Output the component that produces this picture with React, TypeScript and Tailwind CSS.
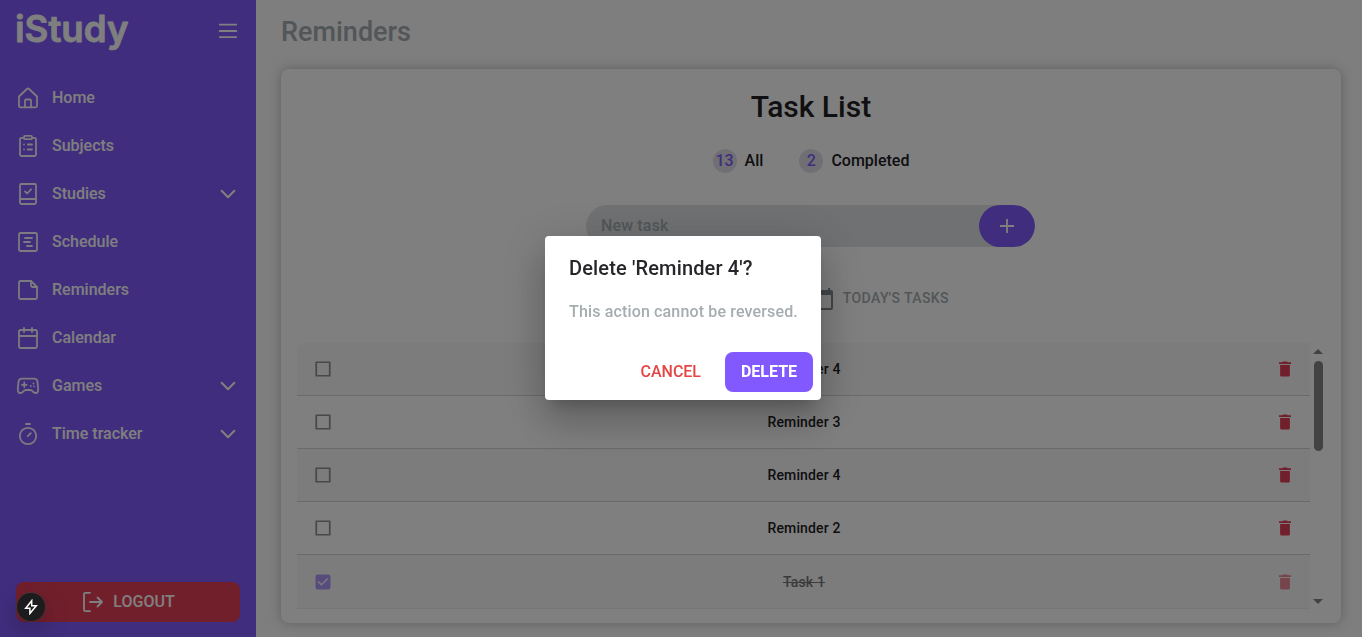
import type { ReactNode } from "react";

function Icon({ children, className = "" }: { children: ReactNode; className?: string }) {
  return (
    <svg
      viewBox="0 0 24 24"
      className={`size-6 shrink-0 ${className}`}
      fill="none"
      stroke="currentColor"
      strokeWidth="1.8"
      strokeLinecap="round"
      strokeLinejoin="round"
    >
      {children}
    </svg>
  );
}

const nav: { label: string; expandable?: boolean; icon: ReactNode }[] = [
  {
    label: "Home",
    icon: (
      <>
        <path d="M3 10.5 10.9 3q1.1-1 2.2 0L21 10.5V19.800a1.5 1.5 0 0 1-1.5 1.5h-15A1.5 1.5 0 0 1 3 19.800Z" />
        <path d="M9 21.300v-6.900a.9.9 0 0 1 .9-.9h4.2a.9.9 0 0 1 .9.9V21.300" />
      </>
    ),
  },
  {
    label: "Subjects",
    icon: (
      <>
        <path d="M8 3.8H5.5A1.5 1.5 0 0 0 4 5.3V20.5A1.5 1.5 0 0 0 5.5 22h13a1.5 1.5 0 0 0 1.5-1.5V5.3a1.5 1.5 0 0 0-1.5-1.5H16" />
        <rect x="8" y="1.9" width="8" height="3.3" rx="1" />
        <path d="M8 10.5h.01M8 15.5h.01M11.8 10.5h4.2M11.8 15.5h4.2" />
      </>
    ),
  },
  {
    label: "Studies",
    expandable: true,
    icon: (
      <>
        <rect x="4" y="2" width="16" height="20" rx="1.5" />
        <path d="M4 17h16M9 9.3l2.1 2.2 4-4.2" />
      </>
    ),
  },
  {
    label: "Schedule",
    icon: (
      <>
        <rect x="3" y="3" width="18" height="18" rx="1.5" />
        <path d="M9 8h7M8 12h6M11 16h5" />
      </>
    ),
  },
  {
    label: "Reminders",
    icon: (
      <>
        <path d="M15 3H4.5A1.5 1.5 0 0 0 3 4.5v15A1.5 1.5 0 0 0 4.5 21h15a1.5 1.5 0 0 0 1.5-1.5V9Z" />
        <path d="M15 3v4.5A1.5 1.5 0 0 0 16.5 9H21" />
      </>
    ),
  },
  {
    label: "Calendar",
    icon: (
      <>
        <rect x="3" y="4" width="18" height="18" rx="1.5" />
        <path d="M3 10h18M8 2v4M16 2v4" />
      </>
    ),
  },
  {
    label: "Games",
    expandable: true,
    icon: (
      <>
        <path d="M6 4.7h12q3 0 3.5 3L22.2 15.5q.1 3.5-2.7 3.5-1.5 0-2.7-1.5T14 16h-4q-1.6 0-2.8 1.5T4.5 19q-2.8 0-2.7-3.5L2.5 7.7q.5-3 3.5-3Z" />
        <path d="M8.3 8.5v4.6M6 10.8h4.6M17.5 9.5h.01M14.8 12h.01M18 12.3h.01" />
      </>
    ),
  },
  {
    label: "Time tracker",
    expandable: true,
    icon: (
      <>
        <circle cx="12" cy="14" r="8.2" />
        <path d="m11.8 14.2 3-3M10 2h4" />
      </>
    ),
  },
];

function Sidebar() {
  return (
    <aside className="flex w-64 shrink-0 flex-col bg-[#815bfb] px-4 text-white">
      <div className="flex h-[62px] items-center justify-between">
        <svg viewBox="0 0 114 48" className="h-12 w-[114px] overflow-visible" role="img">
          <text
            x="-1"
            y="34.5"
            textLength="113.5"
            lengthAdjust="spacingAndGlyphs"
            fill="white"
            stroke="white"
            strokeWidth="0.8"
            strokeLinejoin="round"
            className="font-['Inter',sans-serif] text-[37px] font-semibold"
          >
            iStudy
          </text>
        </svg>
        <Icon>
          <path d="M4 5.7h16M4 12h16M4 18.2h16" strokeLinecap="square" />
        </Icon>
      </div>
      <nav className="mt-3 flex flex-col">
        {nav.map((item) => (
          <div key={item.label} className="flex h-12 items-center gap-3 text-white">
            <Icon className="opacity-95">{item.icon}</Icon>
            <span className="flex-1 text-base leading-6 font-medium">{item.label}</span>
            {item.expandable && (
              <Icon>
                <path d="m5.6 8.8 6.4 6.4 6.4-6.4" strokeWidth="2" />
              </Icon>
            )}
          </div>
        ))}
      </nav>
      <button className="mt-auto mb-[15px] flex h-10 items-center justify-center rounded-lg bg-[#e53e58] text-base font-medium text-white">
        <Icon className="mr-2">
          <path d="M9 2.8H4.5A1.5 1.5 0 0 0 3 4.3v15.4a1.5 1.5 0 0 0 1.5 1.5H9M9 12h12M16.5 7.5 21 12l-4.5 4.5" />
        </Icon>
        LOGOUT
      </button>
    </aside>
  );
}

const tasks = [
  { title: "Reminder 4", done: false },
  { title: "Reminder 3", done: false },
  { title: "Reminder 4", done: false },
  { title: "Reminder 2", done: false },
  { title: "Task 1", done: true },
];

function TaskRow({ title, done }: { title: string; done: boolean }) {
  return (
    <li className="h-[53.3px] border-b border-[#d4d4d4] odd:bg-[#f8f8f8] first:h-[52.5px] first:rounded-tl-lg last:border-[#ededed] last:bg-[#f4f4f4]">
      <div className={`flex h-full items-center pr-4 pl-[17px] ${done ? "opacity-60" : ""}`}>
        <svg viewBox="0 0 24 24" className="size-[18px] shrink-0">
          {done ? (
            <path
              fill="#815bfb"
              d="M19 2H5a3 3 0 0 0-3 3v14a3 3 0 0 0 3 3h14a3 3 0 0 0 3-3V5a3 3 0 0 0-3-3ZM10 17l-5-5 1.4-1.4 3.6 3.6 7.6-7.6L19 8l-9 9Z"
            />
          ) : (
            <path fill="none" stroke="#909090" strokeWidth="2.3" d="M3 3h18v18H3Z" strokeLinejoin="round" />
          )}
        </svg>
        <span className={`flex-1 text-center text-sm font-medium tracking-[0.15px] text-[#202024] ${done ? "line-through" : ""}`}>
          {title}
        </span>
        <svg viewBox="0 0 24 24" className="size-[18px] shrink-0" fill="#e53e58">
          <path d="M5.5 6.5V20a2 2 0 0 0 2 2h9a2 2 0 0 0 2-2V6.5ZM20 3h-4.5l-1-1h-5l-1 1H4v2.2h16Z" />
        </svg>
      </div>
    </li>
  );
}

function Main() {
  return (
    <main className="flex min-w-0 flex-1 flex-col bg-[#fcfcfc] pr-[21px] pb-[14px] pl-[25px]">
      <h1 className="flex h-[69px] items-center pb-[5px] text-[27px] font-medium text-[#a5adb0]">Reminders</h1>
      <section className="flex min-h-0 flex-1 flex-col rounded-lg bg-white px-4 shadow-[0_0_12px_rgba(0,0,0,0.25)]">
        <h2 className="mt-[18px] text-center text-[30px] leading-10 font-medium text-[#202024]">Task List</h2>
        <div className="mt-[22px] flex h-6 items-center justify-center text-base font-medium text-[#202024]">
          <span className="mr-2 flex size-6 items-center justify-center rounded-full bg-[#e0e0e8] text-[#815bfb]">13</span>
          All
          <span className="mr-2 ml-9 flex size-6 items-center justify-center rounded-full bg-[#e0e0e8] text-[#815bfb]">2</span>
          Completed
        </div>
        <div className="mt-8 mr-px flex h-[42px] w-[449px] shrink-0 self-center overflow-hidden rounded-full bg-[#dfe2e6]">
          <span className="flex-1 self-center pl-[15px] text-base font-medium tracking-[0.15px] text-[#a5adb0]">New task</span>
          <button className="flex w-14 items-center justify-center rounded-[21px] bg-[#815bfb] text-white">
            <svg viewBox="0 0 24 24" className="size-6" stroke="currentColor" strokeWidth="1.8">
              <path d="M12 5v14M5 12h14" />
            </svg>
          </button>
        </div>
        <div className="mt-[37px] flex h-7 items-center self-end pr-[376px] text-sm font-medium text-[#a5adb0]">
          <svg viewBox="0 0 24 24" className="mt-0.5 mr-2 size-6" fill="#868e94">
            <path d="M20 3h-1V1h-2v2H7V1H5v2H4a2 2 0 0 0-2 2v16a2 2 0 0 0 2 2h16a2 2 0 0 0 2-2V5a2 2 0 0 0-2-2Zm0 18H4V8h16v13Z" />
          </svg>
          <span className="tracking-[0.4px]">TODAY'S TASKS</span>
        </div>
        <div className="mt-[31px] mr-[-1px] flex h-[266px] shrink-0">
          <ul className="min-w-0 flex-1">
            {tasks.map((task, index) => (
              <TaskRow key={index} {...task} />
            ))}
          </ul>
          <div className="flex w-4 flex-col items-center justify-between pt-1.5 pb-[5px]">
            <div className="flex flex-col items-center gap-[7px]">
              <svg viewBox="0 0 10 5" className="h-[5px] w-[10px]" fill="#858585">
                <path d="M5 0 10 5H0Z" />
              </svg>
              <div className="h-[90px] w-[9px] rounded-full bg-[#858585]" />
            </div>
            <svg viewBox="0 0 10 5" className="h-[5px] w-[10px]" fill="#858585">
              <path d="M0 0h10L5 5Z" />
            </svg>
          </div>
        </div>
      </section>
    </main>
  );
}

function DeleteDialog() {
  return (
    <div className="fixed inset-0 z-10 flex items-center justify-center bg-black/50 pb-px pl-1">
      <div
        role="dialog"
        className="flex h-[164px] w-[276px] flex-col rounded bg-white shadow-[0_11px_15px_-7px_rgba(0,0,0,0.2),0_24px_38px_3px_rgba(0,0,0,0.14),0_9px_46px_8px_rgba(0,0,0,0.12)]"
      >
        <h2 className="px-6 pt-4 text-xl leading-8 font-medium tracking-[0.15px] text-[#26262a]">Delete 'Reminder 4'?</h2>
        <p className="px-6 pt-4 text-base leading-6 font-medium tracking-[0.15px] whitespace-nowrap text-[#a5adb0]">
          This action cannot be reversed.
        </p>
        <div className="mt-auto flex items-center justify-end gap-2 p-2 text-base font-medium">
          <button className="h-10 px-4 text-[#e54545]">CANCEL</button>
          <button className="h-10 w-[88px] rounded-lg bg-[#8259ff] font-bold text-white">DELETE</button>
        </div>
      </div>
    </div>
  );
}

function DevIndicator() {
  return (
    <div className="fixed bottom-[16px] left-[17px] z-20 flex size-7 items-center justify-center rounded-full bg-[#1c1c1e] shadow-[0_0_0_1px_rgba(60,60,60,0.6),0_8px_24px_rgba(0,0,0,0.25)]">
      <svg viewBox="0 0 16 16" className="size-4" fill="none" stroke="white" strokeWidth="1.5" strokeLinejoin="miter">
        <path d="M8.7 1.7 2.7 9.3h4.2v5.2l6.4-7.7H8.7Z" />
      </svg>
    </div>
  );
}

export default function App() {
  return (
    <div className="flex h-screen overflow-hidden font-['Roboto',sans-serif]">
      <Sidebar />
      <Main />
      <DeleteDialog />
      <DevIndicator />
    </div>
  );
}
